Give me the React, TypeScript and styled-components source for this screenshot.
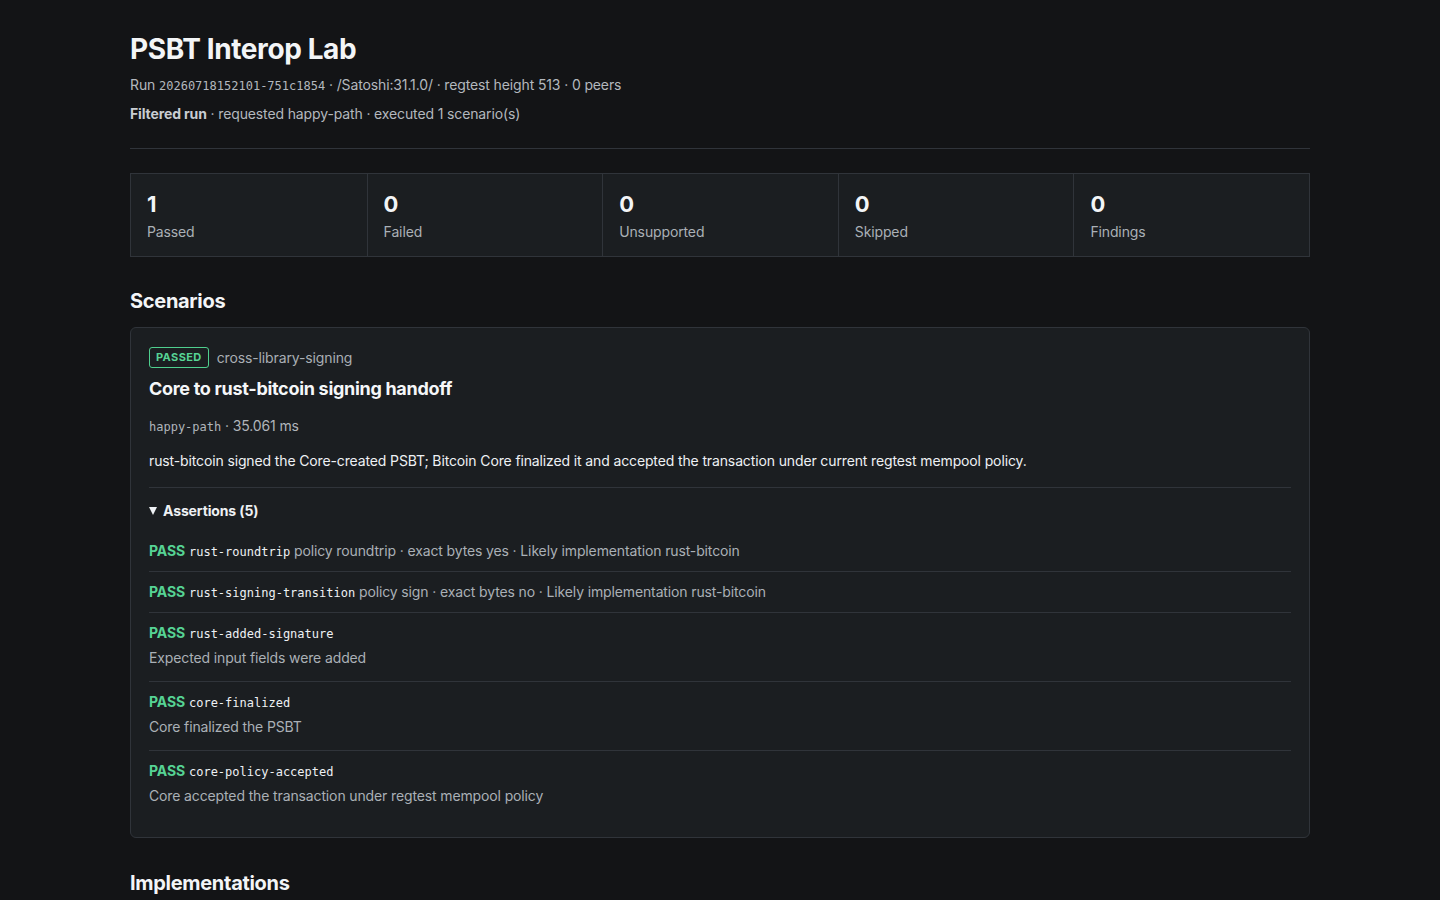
import React from "react";
import styled, { createGlobalStyle } from "styled-components";

const GlobalStyle = createGlobalStyle`
  html, body { margin: 0; padding: 0; background: #131416; }
  body {
    font-family: Inter, "Noto Sans", "Liberation Sans", sans-serif;
    color: #f0f3f6;
    letter-spacing: -0.13px;
    -webkit-font-smoothing: antialiased;
  }
  * { box-sizing: border-box; }
`;

const Page = styled.main`
  width: 1180px;
  margin: 0 auto;
  padding: 32px 0 40px;
`;

const Header = styled.header`
  padding-bottom: 24px;
  border-bottom: 1px solid #30343a;
`;

const Title = styled.h1`
  margin: 0;
  font-size: 28px;
  line-height: 34px;
  font-weight: 700;
  letter-spacing: -0.4px;
  color: #f3f5f7;
`;

const MetaLine = styled.p`
  margin: 9px 0 0;
  font-size: 14px;
  line-height: 20px;
  color: #b3b8be;
`;

const Mono = styled.code<{ $color?: string }>`
  font-family: "DejaVu Sans Mono", "Liberation Mono", monospace;
  font-size: 12px;
  line-height: 1;
  letter-spacing: 0;
  color: ${(p) => p.$color || "inherit"};
`;

const Strong = styled.strong`
  font-weight: 700;
  color: #c9cdd2;
`;

const Stats = styled.section`
  margin-top: 24px;
  display: grid;
  grid-template-columns: repeat(5, 1fr);
  border: 1px solid #30343a;
  background: #1b1e21;
`;

const Stat = styled.div`
  padding: 16px 16px 14px;
  & + & { border-left: 1px solid #30343a; }
`;

const StatValue = styled.div`
  font-size: 22px;
  line-height: 28px;
  font-weight: 700;
  color: #f3f5f7;
`;

const StatLabel = styled.div`
  margin-top: 4px;
  font-size: 14px;
  line-height: 20px;
  color: #aab0b6;
`;

const SectionTitle = styled.h2<{ $top?: number }>`
  margin: ${(p) => p.$top ?? 31}px 0 13px;
  font-size: 20px;
  line-height: 26px;
  font-weight: 700;
  letter-spacing: -0.3px;
  color: #f3f5f7;
`;

const Card = styled.article`
  background: #1b1e21;
  border: 1px solid #30343a;
  border-radius: 6px;
  padding: 18px;
`;

const BadgeRow = styled.div`
  display: flex;
  align-items: center;
  gap: 8px;
  height: 22px;
`;

const Badge = styled.span`
  display: inline-flex;
  align-items: center;
  height: 21px;
  padding: 0 6px;
  border: 1px solid #4fcf8e;
  border-radius: 3px;
  color: #56d394;
  font-size: 11px;
  font-weight: 700;
  letter-spacing: 0.4px;
`;

const Category = styled.span`
  font-size: 14px;
  color: #a9aeb4;
`;

const ScenarioTitle = styled.h3`
  margin: 9px 0 0;
  font-size: 18px;
  line-height: 24px;
  font-weight: 700;
  letter-spacing: -0.3px;
  color: #f5f7f9;
`;

const ScenarioMeta = styled.div`
  margin-top: 15px;
  font-size: 14px;
  line-height: 20px;
  color: #b0b5bb;
`;

const Description = styled.p`
  margin: 15px 0 0;
  font-size: 14px;
  line-height: 20px;
  color: #eef1f4;
`;

const Details = styled.details`
  margin-top: 16px;
  border-top: 1px solid #30343a;
  padding-top: 13px;
`;

const Summary = styled.summary`
  font-size: 14px;
  line-height: 20px;
  font-weight: 700;
  color: #eef1f4;
  cursor: pointer;
  margin-bottom: 10px;
  list-style: none;
  display: flex;
  align-items: center;
  gap: 6px;
  &::-webkit-details-marker { display: none; }
`;

const Caret = styled.span`
  width: 0;
  height: 0;
  border-left: 4.5px solid transparent;
  border-right: 4.5px solid transparent;
  border-top: 8px solid #eef1f4;
`;

const AssertionList = styled.ul`
  margin: 0;
  padding: 0;
  list-style: none;
`;

const Assertion = styled.li<{ $hasDesc?: boolean }>`
  padding: 10px 0 ${(p) => (p.$hasDesc ? "13px" : "10px")};
  & + & { border-top: 1px solid #30343a; }
`;

const AssertionHead = styled.div`
  height: 20px;
  font-size: 14px;
  line-height: 20px;
  color: #aab0b6;
  white-space: nowrap;
`;

const Pass = styled.span`
  font-weight: 700;
  color: #56d394;
  margin-right: 4px;
`;

const AssertionDesc = styled.div`
  margin-top: 5px;
  font-size: 14px;
  line-height: 20px;
  color: #aab0b6;
`;

const stats = [
  { value: 1, label: "Passed" },
  { value: 0, label: "Failed" },
  { value: 0, label: "Unsupported" },
  { value: 0, label: "Skipped" },
  { value: 0, label: "Findings" },
];

const assertions: { id: string; detail?: string; desc?: string }[] = [
  { id: "rust-roundtrip", detail: "policy roundtrip · exact bytes yes · Likely implementation rust-bitcoin" },
  { id: "rust-signing-transition", detail: "policy sign · exact bytes no · Likely implementation rust-bitcoin" },
  { id: "rust-added-signature", desc: "Expected input fields were added" },
  { id: "core-finalized", desc: "Core finalized the PSBT" },
  { id: "core-policy-accepted", desc: "Core accepted the transaction under regtest mempool policy" },
];

export default function App() {
  return (
    <>
      <GlobalStyle />
      <Page>
        <Header>
          <Title>PSBT Interop Lab</Title>
          <MetaLine>
            Run <Mono>20260718152101-751c1854</Mono> · /Satoshi:31.1.0/ · regtest height 513 · 0 peers
          </MetaLine>
          <MetaLine>
            <Strong>Filtered run</Strong> · requested happy-path · executed 1 scenario(s)
          </MetaLine>
        </Header>

        <Stats>
          {stats.map((s) => (
            <Stat key={s.label}>
              <StatValue>{s.value}</StatValue>
              <StatLabel>{s.label}</StatLabel>
            </Stat>
          ))}
        </Stats>

        <SectionTitle>Scenarios</SectionTitle>
        <Card>
          <BadgeRow>
            <Badge>PASSED</Badge>
            <Category>cross-library-signing</Category>
          </BadgeRow>
          <ScenarioTitle>Core to rust-bitcoin signing handoff</ScenarioTitle>
          <ScenarioMeta>
            <Mono>happy-path</Mono> · 35.061 ms
          </ScenarioMeta>
          <Description>
            rust-bitcoin signed the Core-created PSBT; Bitcoin Core finalized it and accepted the transaction under current regtest mempool policy.
          </Description>
          <Details open>
            <Summary>
              <Caret />
              Assertions (5)
            </Summary>
            <AssertionList>
              {assertions.map((a) => (
                <Assertion key={a.id} $hasDesc={!!a.desc}>
                  <AssertionHead>
                    <Pass>PASS</Pass>
                    <Mono $color="#eef1f4">{a.id}</Mono>
                    {a.detail ? <> {a.detail}</> : null}
                  </AssertionHead>
                  {a.desc ? <AssertionDesc>{a.desc}</AssertionDesc> : null}
                </Assertion>
              ))}
            </AssertionList>
          </Details>
        </Card>

        <SectionTitle $top={32}>Implementations</SectionTitle>
      </Page>
    </>
  );
}
